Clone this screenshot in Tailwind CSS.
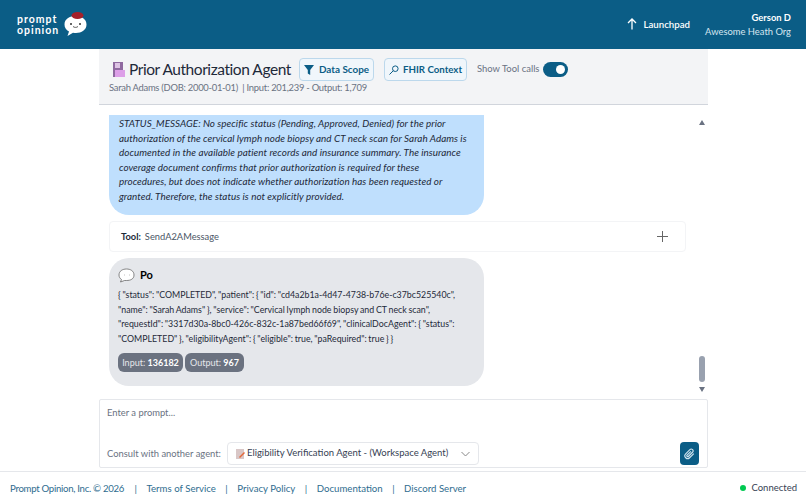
<!DOCTYPE html>
<html lang="en">
<head>
  <meta charset="UTF-8">
  <title>Prior Authorization Agent</title>
  <script src="https://cdn.jsdelivr.net/npm/@tailwindcss/browser@4"></script>
</head>
<body class="bg-white text-gray-800 font-['Lato','Noto_Sans',sans-serif] h-[504px] w-[806px] overflow-hidden flex flex-col">
  <!-- top bar -->
  <header class="h-[49px] shrink-0 bg-[#0b5d86] flex items-center text-white">
    <div class="ml-[17px] text-[10.5px] leading-[10.5px] font-bold tracking-[1px] w-[46px]">prompt<br>opinion</div>
    <svg class="mb-[1px]" width="25" height="26" viewBox="0 0 25 26">
      <path d="M12.500 5c6 0 11 3 11 8.500s-5 8.500-10.500 8.500c-1 0-2 0-3-.3L4.500 25l1.500-4.500C3 19 1.500 16.500 1.500 13.500 1.500 8 6.500 5 12.500 5z" fill="#fff"/>
      <ellipse cx="14.500" cy="4.500" rx="6" ry="3.500" fill="#a5202a"/>
      <circle cx="8" cy="13" r="1" fill="#333"/><circle cx="17" cy="13" r="1" fill="#333"/>
      <path d="M10 15.500c1.500 1.200 3.500 1.200 5 0" stroke="#333" stroke-width=".8" fill="none"/>
    </svg>
    <div class="ml-auto flex items-center gap-[5px] text-[9.700px] font-semibold">
      <svg width="12" height="12" viewBox="0 0 12 12" fill="none" stroke="#fff" stroke-width="1.300"><path d="M6 11.500V1M2 5l4-4 4 4"/></svg>
      Launchpad
    </div>
    <div class="ml-[15px] mr-[15px] text-right text-[9.400px] leading-[14px]">
      <div class="font-bold">Gerson D</div>
      <div class="text-[#d5e6f0]">Awesome Heath Org</div>
    </div>
  </header>

  <main class="w-[609px] ml-[99px] flex-1 min-h-0 flex flex-col">
    <!-- agent heading -->
    <div class="h-[56px] shrink-0 bg-[#f3f4f6] border-b border-gray-300 pl-[10px] pt-[8px]">
      <div class="flex items-center h-[25px]">
        <svg class="ml-[4px]" width="12" height="15" viewBox="0 0 12 15">
          <rect width="10" height="15" fill="#8f6aa0"/><rect x="2" y="8" width="10" height="7" fill="#dd9fe8"/><rect x="2" y="1" width="5" height="5" fill="#ddc3e4"/>
        </svg>
        <h1 class="ml-[4px] w-[160px] whitespace-nowrap text-[15.500px] tracking-[-.44px] text-gray-800">Prior Authorization Agent</h1>
        <button class="ml-[10px] h-[23px] w-[75px] bg-[#f0f6fb] border border-[#bcd8ec] rounded text-[9.900px] font-bold text-[#0b5d86] flex items-center justify-center gap-[5px]">
          <svg width="10" height="10" viewBox="0 0 10 10" fill="#0b5d86"><path d="M0 0h10L6.200 5v5L3.800 8.500V5z"/></svg>
          Data Scope
        </button>
        <button class="ml-[10px] h-[23px] w-[83px] bg-[#f0f6fb] border border-[#bcd8ec] rounded text-[9.700px] font-bold text-[#0b5d86] flex items-center justify-center gap-[4px]">
          <svg width="10" height="10" viewBox="0 0 10 10" fill="none" stroke="#0b5d86"><circle cx="6.300" cy="3.700" r="2.800"/><path d="M4.300 5.700L.5 9.500"/></svg>
          FHIR Context
        </button>
        <span class="ml-[10px] text-[9.450px] text-gray-500">Show Tool calls</span>
        <div class="ml-[4px] w-[25px] h-[15px] rounded-full bg-[#0b5d86] flex items-center justify-end pr-[3px]">
          <div class="w-[9px] h-[9px] rounded-full bg-white"></div>
        </div>
      </div>
      <div class="text-[9.400px] text-gray-500 mt-[-1px] tracking-[-.25px]">Sarah Adams (DOB: 2000-01-01) &nbsp;| Input: 201,239 - Output: 1,709</div>
    </div>

    <!-- chat -->
    <div class="h-[294px] shrink-0 flex overflow-hidden">
      <div class="w-[587px] shrink-0 pl-[10px] pt-[10px] flex flex-col gap-[6px]">
        <div class="w-[375px] h-[100px] shrink-0 bg-[#bfdffd] rounded-b-[20px] px-[10px] pt-[1px] text-[9.900px] leading-[14.600px] italic tracking-[.03px] text-gray-800 whitespace-nowrap">
          STATUS_MESSAGE: No specific status (Pending, Approved, Denied) for the prior<br>
          authorization of the cervical lymph node biopsy and CT neck scan for Sarah Adams is<br>
          documented in the available patient records and insurance summary. The insurance<br>
          coverage document confirms that prior authorization is required for these<br>
          procedures, but does not indicate whether authorization has been requested or<br>
          granted. Therefore, the status is not explicitly provided.
        </div>
        <div class="h-[31px] shrink-0 border border-gray-100 rounded flex items-center pl-[11px] pr-[17px] text-[9.300px]">
          <b class="font-bold">Tool:</b><span class="ml-[4px] text-gray-600">SendA2AMessage</span>
          <svg class="ml-auto" width="11" height="11" viewBox="0 0 11 11" stroke="#666"><path d="M5.500 0v11M0 5.500h11"/></svg>
        </div>
        <div class="w-[375px] h-[128px] shrink-0 bg-[#e5e7eb] rounded-[20px] px-[9px] pt-[9px] text-[8.800px] text-gray-800 whitespace-nowrap">
          <div class="flex items-center gap-[5px] h-[16px]">
            <svg width="17" height="15" viewBox="0 0 17 15" fill="#fff" stroke="#555" stroke-width=".7"><path d="M8.500 1c4 0 7.500 2 7.500 6s-3.500 5.500-7.500 5.500H6.500L2.500 14l1-2.500C2 10.500 1 9 1 7c0-4 3.500-6 7.500-6z"/><path d="M6 7h.5M11 7h.5"/></svg>
            <b class="text-[11px] font-bold text-black">Po</b>
          </div>
          <div class="mt-[5px] leading-[14.700px] [word-spacing:-.5px]">
            { "status": "COMPLETED", "patient": { "id": "cd4a2b1a-4d47-4738-b76e-c37bc525540c",<br>
            "name": "Sarah Adams" }, "service": "Cervical lymph node biopsy and CT neck scan",<br>
            "requestId": "3317d30a-8bc0-426c-832c-1a87bed66f69", "clinicalDocAgent": { "status":<br>
            "COMPLETED" }, "eligibilityAgent": { "eligible": true, "paRequired": true } }
          </div>
          <div class="mt-[6px] flex gap-[2px] text-[9px] text-[#e5e7eb]">
            <span class="h-[19px] w-[65px] rounded-md bg-[#6b7280] flex items-center justify-center">Input:&nbsp;<b class="text-white">136182</b></span>
            <span class="h-[19px] w-[59px] rounded-md bg-[#6b7280] flex items-center justify-center">Output:&nbsp;<b class="text-white">967</b></span>
          </div>
        </div>
      </div>
      <div class="w-[16px] ml-[8px] shrink-0 flex flex-col items-center pt-[15px]">
        <div class="w-0 h-0 border-x-[3px] border-x-transparent border-b-[5px] border-b-gray-500"></div>
        <div class="w-[6px] h-[26px] rounded-full bg-gray-400 mt-[231px]"></div>
        <div class="w-0 h-0 border-x-[3px] border-x-transparent border-t-[5px] border-t-gray-500 mt-[5px]"></div>
      </div>
    </div>

    <!-- prompt box -->
    <div class="h-[69px] shrink-0 border border-gray-200 rounded-[2px] pl-[7px] pr-[8px] pt-[6px]">
      <div class="text-[9.400px] text-gray-500">Enter a prompt...</div>
      <div class="flex items-center mt-[22px]">
        <span class="text-[9.400px] text-gray-500 whitespace-nowrap">Consult with another agent:</span>
        <div class="ml-[6px] w-[252px] h-[23px] border border-gray-200 rounded flex items-center pl-[8px] text-[9.500px] text-gray-700 whitespace-nowrap">
          <svg width="9" height="10" viewBox="0 0 9 10"><rect width="8" height="10" fill="#d9c7c7"/><path d="M3 8l5-5 1 1-5 5z" fill="#e4683a"/></svg>
          <span class="ml-[2px]">Eligibility Verification Agent - (Workspace Agent)</span>
          <svg class="ml-auto mr-[8px]" width="9" height="6" viewBox="0 0 9 6" fill="none" stroke="#888"><path d="M.5 1l4 4 4-4"/></svg>
        </div>
        <button class="ml-auto w-[19px] h-[23px] rounded bg-[#0b5d86] flex items-center justify-center">
          <svg width="11" height="12" viewBox="0 0 24 24" fill="none" stroke="#cfe3ef" stroke-width="2.500"><path d="M21.400 11l-9.200 9.200a6 6 0 0 1-8.500-8.500l9.200-9.200a4 4 0 0 1 5.700 5.700l-9.200 9.200a2 2 0 0 1-2.800-2.800l8.500-8.500"/></svg>
        </button>
      </div>
    </div>
  </main>

  <!-- footer -->
  <footer class="h-[33px] shrink-0 mt-[3px] border-t border-gray-200 flex items-center pl-[10px] pr-[9px] text-[9.650px] text-[#2f6d8f] whitespace-pre">
    <span class="tracking-[-.3px]">Prompt Opinion, Inc. © 2026</span>
    <span class="ml-[10.5px]">|</span><span class="ml-[9.5px]">Terms of Service</span>
    <span class="ml-[9.5px]">|</span><span class="ml-[9.5px]">Privacy Policy</span>
    <span class="ml-[9.5px]">|</span><span class="ml-[9.5px]">Documentation</span>
    <span class="ml-[9.5px]">|</span><span class="ml-[9.5px]">Discord Server</span>
    <span class="ml-auto w-[6px] h-[6px] rounded-full bg-green-500"></span>
    <span class="ml-[5px] text-gray-700 text-[9.500px]">Connected</span>
  </footer>
</body>
</html>
